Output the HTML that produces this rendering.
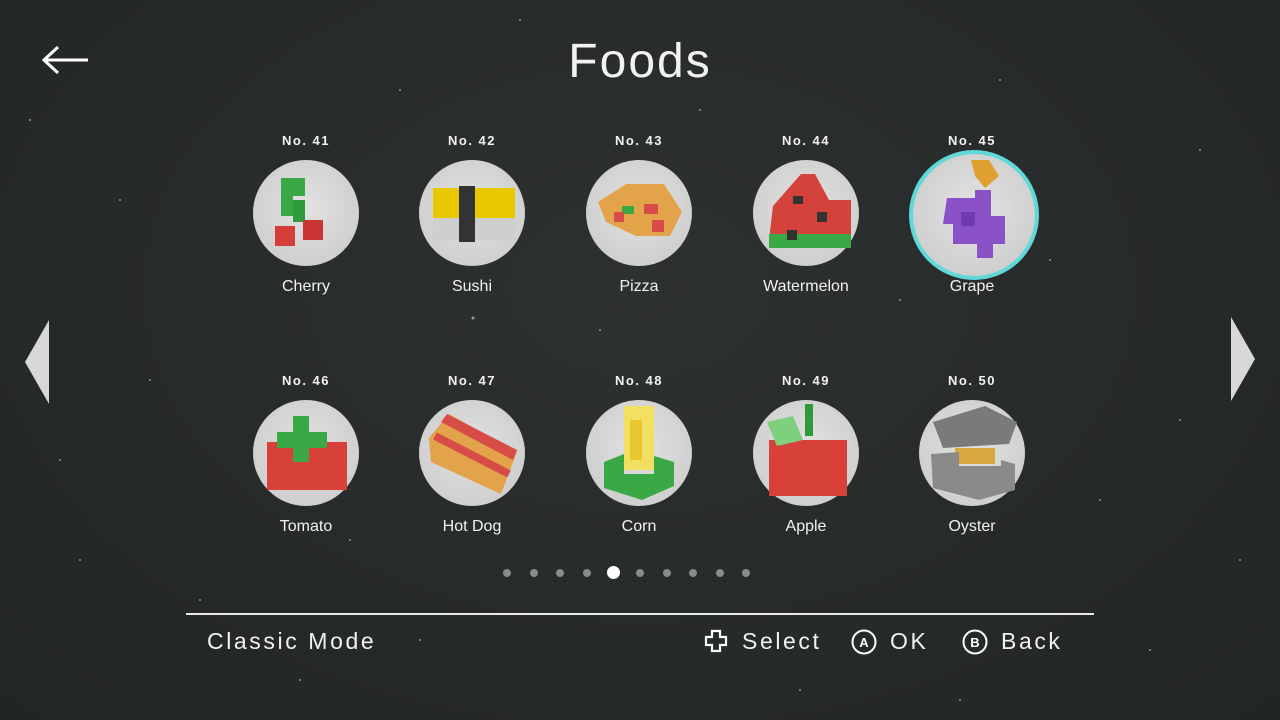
<!DOCTYPE html>
<html><head><meta charset="utf-8"><style>
html,body{margin:0;padding:0}
body{width:1280px;height:720px;overflow:hidden;background:radial-gradient(ellipse at 50% 40%,#2e3131 0%,#272a2a 60%,#222525 100%);font-family:"Liberation Sans","DejaVu Sans",sans-serif;color:#f2f2f2;position:relative}
.t{position:absolute;text-align:center}
.no{font-size:13px;font-weight:bold;letter-spacing:1.5px;width:120px;top:133px}
.nm{font-size:16px;width:140px}
.c{position:absolute;width:106px;height:106px;border-radius:50%;background:radial-gradient(circle at 50% 45%,#e2e2e2,#c8c8c8)}
.dot{position:absolute;width:8px;height:8px;border-radius:50%;background:#8a8c8c;top:569px}
</style></head><body>
<svg width="1280" height="720" style="position:absolute;left:0;top:0" fill="#fff" opacity=".5">
<circle cx="120" cy="200" r="1"/><circle cx="400" cy="90" r="1"/><circle cx="473" cy="318" r="1.5"/><circle cx="900" cy="300" r="1"/><circle cx="1100" cy="500" r="1"/><circle cx="200" cy="600" r="1"/><circle cx="60" cy="460" r="1"/><circle cx="1200" cy="150" r="1"/><circle cx="800" cy="690" r="1"/><circle cx="350" cy="540" r="1"/><circle cx="1000" cy="80" r="1"/><circle cx="600" cy="330" r="1"/><circle cx="150" cy="380" r="1"/><circle cx="1150" cy="650" r="1"/>
<circle cx="80" cy="560" r="1"/><circle cx="300" cy="680" r="1"/><circle cx="520" cy="20" r="1"/><circle cx="1050" cy="260" r="1"/><circle cx="1180" cy="420" r="1"/><circle cx="700" cy="110" r="1"/><circle cx="30" cy="120" r="1"/><circle cx="960" cy="700" r="1"/><circle cx="1240" cy="560" r="1"/><circle cx="420" cy="640" r="1"/>
</svg>
<svg width="50" height="30" style="position:absolute;left:42px;top:45px"><path d="M2 15H46M16 2L2 15L16 28" stroke="#fff" stroke-width="3" fill="none"/></svg>
<div class="t" style="left:540px;width:200px;top:34px;font-size:48px;letter-spacing:2px">Foods</div>
<svg width="30" height="90" style="position:absolute;left:22px;top:318px"><path d="M27 2L3 44L27 86Z" fill="#d8d8d8"/></svg>
<svg width="30" height="90" style="position:absolute;left:1228px;top:315px"><path d="M3 2L27 44L3 86Z" fill="#d8d8d8"/></svg>

<div class="t no" style="left:246px">No. 41</div><div class="t no" style="left:412px">No. 42</div><div class="t no" style="left:579px">No. 43</div><div class="t no" style="left:746px">No. 44</div><div class="t no" style="left:912px">No. 45</div>
<div class="t no" style="left:246px;top:373px">No. 46</div><div class="t no" style="left:412px;top:373px">No. 47</div><div class="t no" style="left:579px;top:373px">No. 48</div><div class="t no" style="left:746px;top:373px">No. 49</div><div class="t no" style="left:912px;top:373px">No. 50</div>

<div class="c" style="left:253px;top:160px"><svg width="106" height="106"><path d="M28 18H52V36H40V56H28Z" fill="#3aa845"/><path d="M40 40H52V62H40Z" fill="#2e9a3a"/><rect x="22" y="66" width="20" height="20" fill="#d53d3a"/><rect x="50" y="60" width="20" height="20" fill="#c83532"/></svg></div>
<div class="c" style="left:419px;top:160px"><svg width="106" height="106"><rect x="14" y="28" width="82" height="30" fill="#e8c800"/><rect x="14" y="58" width="82" height="22" fill="#cfcfcf"/><rect x="40" y="26" width="16" height="56" fill="#333"/></svg></div>
<div class="c" style="left:586px;top:160px"><svg width="106" height="106"><path d="M12 42L40 24H78L96 52L84 76H50L20 62Z" fill="#e3a34a"/><rect x="36" y="46" width="12" height="8" fill="#3aa845"/><rect x="58" y="44" width="14" height="10" fill="#d84c48"/><rect x="66" y="60" width="12" height="12" fill="#d84c48"/><rect x="28" y="52" width="10" height="10" fill="#d84c48"/></svg></div>
<div class="c" style="left:753px;top:160px"><svg width="106" height="106"><path d="M20 46L48 14H62L76 40H98V80H16Z" fill="#d4423c"/><rect x="16" y="74" width="82" height="14" fill="#3aa845"/><rect x="40" y="36" width="10" height="8" fill="#333"/><rect x="64" y="52" width="10" height="10" fill="#333"/><rect x="34" y="70" width="10" height="10" fill="#333"/></svg></div>
<div style="position:absolute;left:909px;top:150px;width:122px;height:122px;border-radius:50%;border:4px solid #5fd8d8;background:radial-gradient(circle at 50% 45%,#e2e2e2,#c8c8c8)"><svg width="122" height="122"><path d="M58 6H76L86 22L72 34L62 22Z" fill="#e0a030"/><path d="M34 44H62V36H78V62H92V90H80V104H64V90H40V70H30Z" fill="#8a52c6"/><rect x="48" y="58" width="14" height="14" fill="#6e3cae"/></svg></div>

<div class="c" style="left:253px;top:400px"><svg width="106" height="106"><rect x="14" y="42" width="80" height="48" fill="#d8403a"/><path d="M40 16H56V32H74V48H56V62H40V48H24V32H40Z" fill="#3aa845"/></svg></div>
<div class="c" style="left:419px;top:400px"><svg width="106" height="106"><path d="M10 38L30 14L98 52L82 94L12 62Z" fill="#e3a34a"/><path d="M22 22L28 14L98 50L94 60Z" fill="#d84c48"/><path d="M16 36L90 74" stroke="#d84c48" stroke-width="8"/></svg></div>
<div class="c" style="left:586px;top:400px"><svg width="106" height="106"><rect x="38" y="6" width="30" height="64" fill="#f2e060"/><rect x="44" y="20" width="12" height="40" fill="#e8c830"/><path d="M18 62L38 54V74H68V56L88 62V86L56 100L18 88Z" fill="#3aa845"/></svg></div>
<div class="c" style="left:753px;top:400px"><svg width="106" height="106"><rect x="16" y="40" width="78" height="56" fill="#d8403a"/><path d="M52 4H60V36H52Z" fill="#2e9a3a"/><path d="M14 22L40 16L50 40L24 46Z" fill="#7ed07e"/></svg></div>
<div class="c" style="left:919px;top:400px"><svg width="106" height="106"><path d="M14 22L66 6L98 22L90 44L24 48Z" fill="#7a7a7a"/><rect x="36" y="48" width="40" height="16" fill="#d8a840"/><path d="M12 54L40 52V66H82V60L96 64V90L60 100L14 88Z" fill="#8a8a8a"/></svg></div>

<div class="t nm" style="left:236px;top:278px">Cherry</div><div class="t nm" style="left:402px;top:278px">Sushi</div><div class="t nm" style="left:569px;top:278px">Pizza</div><div class="t nm" style="left:736px;top:278px">Watermelon</div><div class="t nm" style="left:902px;top:278px">Grape</div>
<div class="t nm" style="left:236px;top:518px">Tomato</div><div class="t nm" style="left:402px;top:518px">Hot Dog</div><div class="t nm" style="left:569px;top:518px">Corn</div><div class="t nm" style="left:736px;top:518px">Apple</div><div class="t nm" style="left:902px;top:518px">Oyster</div>

<div class="dot" style="left:503px"></div><div class="dot" style="left:530px"></div><div class="dot" style="left:556px"></div><div class="dot" style="left:583px"></div>
<div class="dot" style="left:607px;top:566px;width:13px;height:13px;background:#fff"></div>
<div class="dot" style="left:636px"></div><div class="dot" style="left:663px"></div><div class="dot" style="left:689px"></div><div class="dot" style="left:716px"></div><div class="dot" style="left:742px"></div>

<div style="position:absolute;left:186px;top:613px;width:908px;height:2px;background:#e8e8e8"></div>
<div class="t" style="left:207px;top:628px;font-size:23px;letter-spacing:2.6px;text-align:left">Classic Mode</div>
<svg width="26" height="26" style="position:absolute;left:704px;top:629px"><path d="M8 2H16V8H22V16H16V22H8V16H2V8H8Z" fill="none" stroke="#fff" stroke-width="2.2"/></svg>
<div class="t" style="left:742px;top:628px;font-size:23px;letter-spacing:2.6px;text-align:left">Select</div>
<svg width="26" height="26" style="position:absolute;left:851px;top:629px"><circle cx="13" cy="13" r="11.5" fill="none" stroke="#fff" stroke-width="2"/><text x="13" y="18" font-size="13" font-weight="bold" text-anchor="middle" fill="#fff" font-family="Liberation Sans">A</text></svg>
<div class="t" style="left:890px;top:628px;font-size:23px;letter-spacing:2.6px;text-align:left">OK</div>
<svg width="26" height="26" style="position:absolute;left:962px;top:629px"><circle cx="13" cy="13" r="11.5" fill="none" stroke="#fff" stroke-width="2"/><text x="13" y="18" font-size="13" font-weight="bold" text-anchor="middle" fill="#fff" font-family="Liberation Sans">B</text></svg>
<div class="t" style="left:1001px;top:628px;font-size:23px;letter-spacing:2.6px;text-align:left">Back</div>
</body></html>
